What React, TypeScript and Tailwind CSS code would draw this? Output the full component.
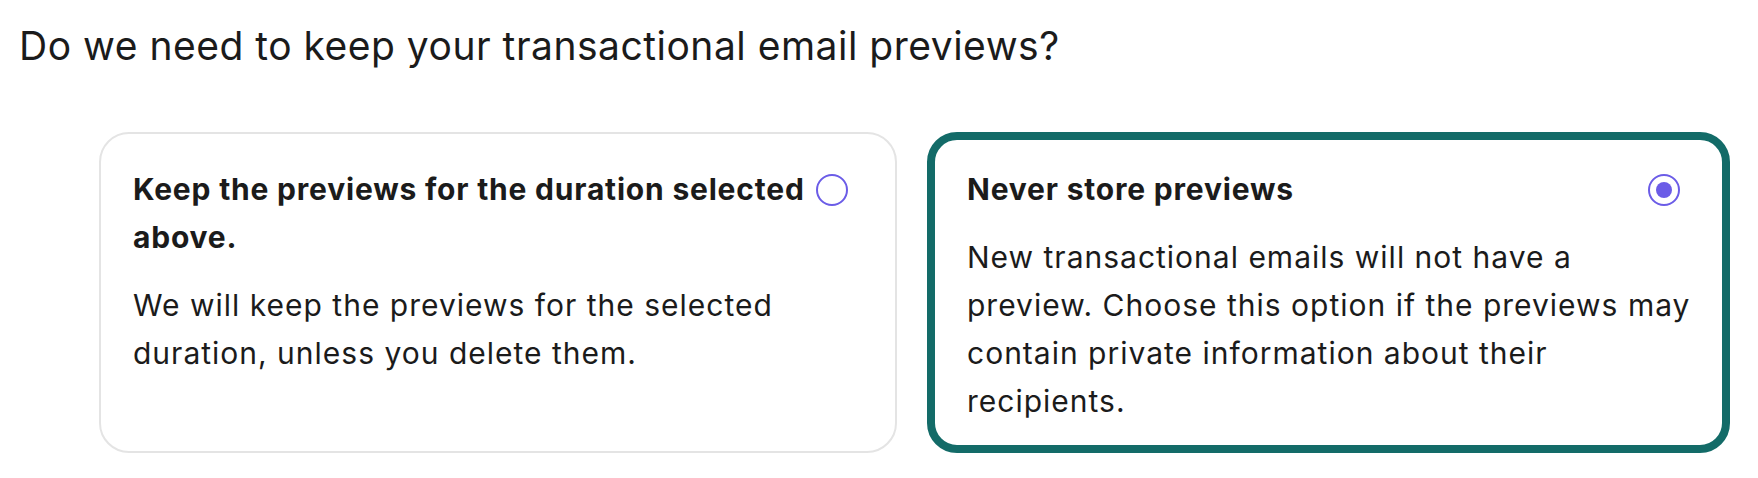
import { useState } from "react";

type Option = {
  id: string;
  title: string;
  body: string;
};

const OPTIONS: Option[] = [
  {
    id: "keep",
    title: "Keep the previews for the duration selected above.",
    body: "We will keep the previews for the selected duration, unless you delete them.",
  },
  {
    id: "never",
    title: "Never store previews",
    body: "New transactional emails will not have a preview. Choose this option if the previews may contain private information about their recipients.",
  },
];

function Radio({ checked }: { checked: boolean }) {
  return (
    <svg
      width="32"
      height="32"
      viewBox="0 0 32 32"
      className={checked ? "shrink-0 mt-[9px] mr-[18px]" : "shrink-0 mt-[9px] mr-[15px]"}
    >
      <circle cx="16" cy="16" r="15" fill="white" stroke="#6b5ce7" strokeWidth="2" />
      {checked && <circle cx="16" cy="16" r="8" fill="#6b5ce7" />}
    </svg>
  );
}

export default function App() {
  const [selected, setSelected] = useState("never");

  return (
    <div className="min-h-[478px] bg-white pl-[19px] pt-[22px] font-['Inter',sans-serif] text-[#1b1b1b]">
      <h1 className="text-[39px] leading-[47px] font-normal tracking-[0.5px]">
        Do we need to keep your transactional email previews?
      </h1>

      <div className="mt-[63px] ml-[80px] flex items-stretch gap-[30px]">
        {OPTIONS.map((opt) => {
          const isOn = selected === opt.id;
          return (
            <button
              key={opt.id}
              type="button"
              onClick={() => setSelected(opt.id)}
              className={
                isOn
                  ? "w-[803px] h-[321px] text-left rounded-[30px] border-[8px] border-[#136b68] pt-[25px] pb-[17px] pl-[32px] pr-[24px] flex flex-col gap-[20px]"
                  : "w-[798px] h-[321px] text-left rounded-[30px] border-2 border-[#e4e4e4] pt-[31px] pb-[17px] pl-[32px] pr-[32px] flex flex-col gap-[20px]"
              }
            >
              <div className="flex items-start justify-between gap-[4px]">
                <span className="text-[30px] leading-[48px] font-bold tracking-[0.8px]">
                  {opt.title}
                </span>
                <Radio checked={isOn} />
              </div>
              <p
                className={
                  isOn
                    ? "text-[30px] leading-[48px] tracking-[1px]"
                    : "text-[30px] leading-[48px] tracking-[1px] pr-[47px]"
                }
              >
                {opt.body}
              </p>
            </button>
          );
        })}
      </div>
    </div>
  );
}
